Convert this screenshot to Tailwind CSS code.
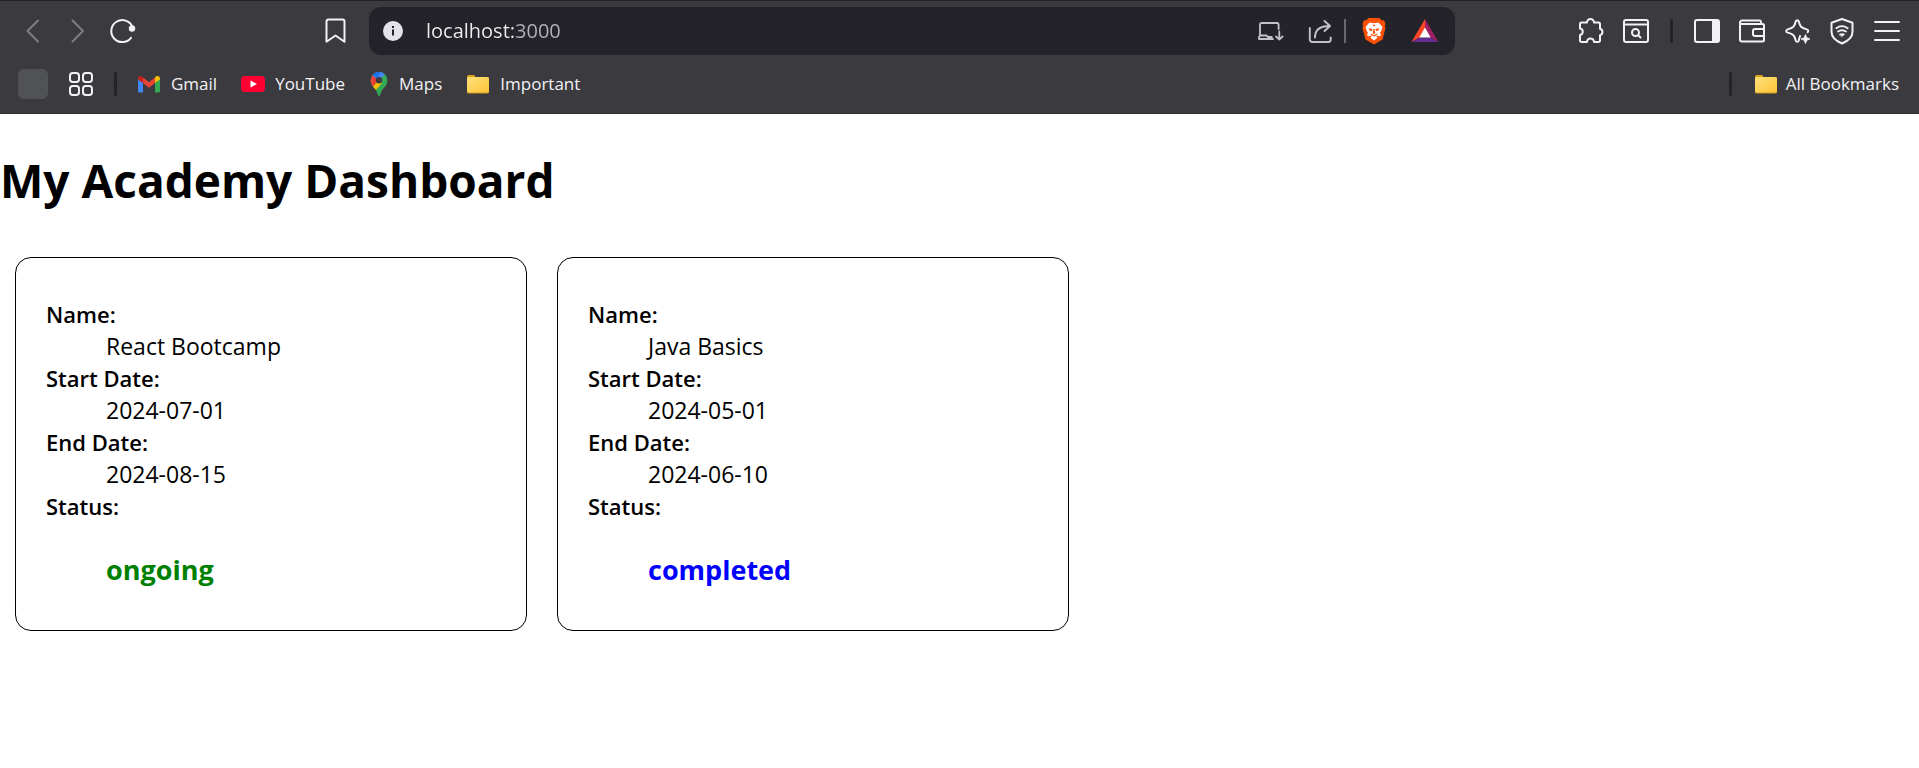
<!DOCTYPE html>
<html lang="en">
<head>
<meta charset="utf-8">
<title>My Academy Dashboard</title>
<script src="https://cdn.jsdelivr.net/npm/@tailwindcss/browser@4"></script>
</head>
<body class="min-h-screen bg-white text-black font-['Open_Sans','Noto_Sans',sans-serif]">
<header class="border-t border-b border-t-[#232227] border-b-[#302f34] bg-[#3b3a3f] text-[#f2f2f5]">
  <div class="flex h-[60px] items-center px-2.5">
    <button aria-label="Back" class="flex h-12 w-[45px] items-center justify-center text-[#7f7e83]"><svg class="size-7" viewBox="0 0 28 28" fill="none" stroke="currentColor" stroke-width="2" stroke-linecap="round" stroke-linejoin="round"><path d="M19 3.500 8.500 14 19 24.500"/></svg></button>
    <button aria-label="Forward" class="flex h-12 w-[45px] items-center justify-center text-[#7f7e83]"><svg class="size-7" viewBox="0 0 28 28" fill="none" stroke="currentColor" stroke-width="2" stroke-linecap="round" stroke-linejoin="round"><path d="M8.500 3.500 19 14 8.500 24.500"/></svg></button>
    <button aria-label="Reload" class="flex h-12 w-[45px] items-center justify-center"><svg class="size-7" viewBox="0 0 28 28" fill="none" stroke="currentColor" stroke-width="2" stroke-linecap="round"><path d="M22 20.800A11 11 0 1 1 23.500 10"/><circle cx="23" cy="11.500" r="3.200" fill="currentColor" stroke="none"/></svg></button>
    <button aria-label="Bookmark this page" class="ml-[167px] flex h-12 w-[45px] items-center justify-center"><svg class="size-7" viewBox="0 0 28 28" fill="none" stroke="currentColor" stroke-width="2" stroke-linejoin="round"><path d="M7.500 2.500h14a2 2 0 0 1 2 2v20.200l-9-6.200-9 6.200V4.500a2 2 0 0 1 2-2z"/></svg></button>
    <div class="ml-3 flex h-12 flex-1 items-center rounded-xl bg-[#242329] pr-1.5 pl-3.5">
      <button aria-label="Site information" class="size-5"><svg class="size-5" viewBox="0 0 20 20"><circle cx="10" cy="10" r="10" fill="#e3e2e8"/><path d="M9 8.500h2v6H9zM9 5h2v2H9z" fill="#242329"/></svg></button>
      <input aria-label="Address" value="localhost:3000" class="ml-[23px] h-8 min-w-0 flex-1 bg-transparent bg-linear-to-r from-[#f0f0f4] from-[90px] to-[#b4b3b9] to-[90px] bg-clip-text text-xl leading-8 text-transparent outline-none">
      <button aria-label="Install app" class="mr-0.5 flex h-12 w-12 items-center justify-center text-[#c3c2c8]"><svg class="size-7" viewBox="0 0 28 28" fill="none" stroke="currentColor" stroke-width="1.800" stroke-linecap="round" stroke-linejoin="round"><path d="M4 18.500V7.500A1.500 1.500 0 0 1 5.500 6h15.600a1.500 1.500 0 0 1 1.500 1.500V12M4 18.500h6.500l1.500 1.500h3.800M4 18.500l-1 1.500v2h14"/><path d="M23.300 14.500v8M20 19.500l3.300 3 3.300-3"/></svg></button>
      <button aria-label="Share" class="flex h-12 w-12 items-center justify-center text-[#c3c2c8]"><svg class="size-7" viewBox="0 0 28 28" fill="none" stroke="currentColor" stroke-width="1.900" stroke-linecap="round" stroke-linejoin="round"><path d="M3.800 11v11.500a2.500 2.500 0 0 0 2.500 2.500h15.900a2.500 2.500 0 0 0 2.500-2.500v-2"/><path d="M9 20.500c0-7.500 4.500-11.500 14.500-11.500M18.500 4l5.500 5-5.500 5"/></svg></button>
      <div class="mr-1 h-6 w-0.5 bg-[#69686e]"></div>
      <button aria-label="Brave Shields" class="mr-[3px] flex h-12 w-12 items-center justify-center"><svg class="size-7" viewBox="0 0 28 28"><path d="M8.500 1h11l2.500 2.500 2-.3L25.500 7l-.7 2 .7 2-3 11.500L14 27.500 5.500 22.500 2.500 11l.7-2-.7-2L4 3.200l2 .3z" fill="#fb5008"/><path d="M9.500 5.500 14 6.300l4.500-.8 4 4.500-1.500 4.500-1 1.200 1 2.300-1.500 1.500-2-1-1 .8 1 1.500L14 23.500l-3.500-2.700 1-1.500-1-.8-2 1L7 18l1-2.300-1-1.200L5.500 10z" fill="#fff"/><path d="M8.500 11.200l4 .8-.5 2-2.300-.5zM19.500 11.200l-4 .8.500 2 2.300-.5zM13.400 12h1.200l.6 4-1.200 1.500L12.800 16zM10.500 16.300l3.500 2 3.500-2-.8 1.900-2.700 1.300-2.700-1.300zM12.200 7.800h3.600L14 9.500z" fill="#fb5008"/></svg></button>
      <button aria-label="Brave Rewards" class="flex h-12 w-12 items-center justify-center"><svg class="size-7" viewBox="0 0 28 28"><path d="M14 2v9L8.500 20.500.5 25z" fill="#ff4724"/><path d="M14 2v9l5.500 9.500 8 4.500z" fill="#9e1f63"/><path d="M.5 25l8-4.500h11l8 4.500z" fill="#662d91"/><path d="M14 10.500 19.700 20.500H8.300z" fill="#fff"/></svg></button>
    </div>
    <button aria-label="Extensions" class="ml-[113px] flex h-12 w-[45px] items-center justify-center"><svg class="size-7" viewBox="0 0 28 28" fill="none" stroke="currentColor" stroke-width="2" stroke-linejoin="round"><path d="M4.500 5.500H10a3.500 3.500 0 0 1 7 0h4.500a1.500 1.500 0 0 1 1.500 1.500v4.800a3.300 3.300 0 0 1 0 6.400v5.300a1.500 1.500 0 0 1-1.500 1.500H17a3.500 3.500 0 0 0-7 0H4.500A1.500 1.500 0 0 1 3 23.500V18a3.300 3.300 0 0 0 0-6.500V7a1.500 1.500 0 0 1 1.500-1.500z"/></svg></button>
    <button aria-label="Search tabs" class="flex h-12 w-[45px] items-center justify-center"><svg class="size-7" viewBox="0 0 28 28" fill="none" stroke="currentColor" stroke-width="2" stroke-linecap="round"><rect x="2" y="3" width="24" height="22" rx="2"/><path d="M2 7.500h24"/><circle cx="13.500" cy="15.500" r="3.500"/><path d="m16.500 18.500 2 2"/></svg></button>
    <div class="mr-[11px] ml-3 h-6 w-[3px] rounded-full bg-[#232227]"></div>
    <button aria-label="Sidebar" class="flex h-12 w-[45px] items-center justify-center"><svg class="size-7" viewBox="0 0 28 28" fill="none" stroke="currentColor" stroke-width="2"><rect x="2" y="3" width="24" height="22" rx="2"/><path d="M19 3h7v22h-7z" fill="currentColor" stroke="none"/></svg></button>
    <button aria-label="Wallet" class="flex h-12 w-[45px] items-center justify-center"><svg class="size-7" viewBox="0 0 28 28" fill="none" stroke="currentColor" stroke-width="2" stroke-linejoin="round"><path d="M23 7V5a1.500 1.500 0 0 0-1.500-1.500H4A2 2 0 0 0 2 5.500 1.800 1.800 0 0 0 4 7h20.500A1.500 1.500 0 0 1 26 8.500V23a1.500 1.500 0 0 1-1.500 1.500H4A2 2 0 0 1 2 22.500v-17"/><path d="M26 12h-9a2 2 0 0 0-2 2v3a2 2 0 0 0 2 2h9"/></svg></button>
    <button aria-label="Leo AI" class="flex h-12 w-[45px] items-center justify-center"><svg class="size-7" viewBox="0 0 28 28" fill="none" stroke="currentColor" stroke-width="2" stroke-linejoin="round"><path d="M17.500 18.300c-1 1.500-1.300 3.300-1.700 5.200-.5 1.700-2.600 1.700-3.100 0-1.200-5-2.200-6.500-8-7.900-2-.5-2-2.700 0-3.200 5.800-1.400 6.800-2.900 8-7.900.5-1.700 2.600-1.700 3.100 0 1.200 5 2.200 6.500 8 7.900 2 .5 2 2.600 0 3.200"/><path d="M22.500 17.500l1.300 3.200 3.200 1.300-3.200 1.300-1.300 3.200-1.300-3.200L18 22l3.200-1.300z" fill="currentColor" stroke-width=".8"/></svg></button>
    <button aria-label="VPN" class="flex h-12 w-[45px] items-center justify-center"><svg class="size-7" viewBox="0 0 28 28" fill="none" stroke="currentColor" stroke-width="2" stroke-linecap="round" stroke-linejoin="round"><path d="M14 2l10.500 3.700v9c0 5-4 9-10.500 11.800C7.500 23.700 3.500 19.700 3.500 14.700v-9z"/><path d="M8.300 11.200c3.500-2.600 7.900-2.600 11.400 0M10 14.600c2.500-1.700 5.500-1.700 8 0" stroke-width="1.800"/><path d="M11.200 17.300c1.800-1.100 3.800-1.100 5.600 0L14 19.600z" fill="currentColor" stroke-width=".5"/></svg></button>
    <button aria-label="Menu" class="flex h-12 w-[45px] items-center justify-center"><svg class="size-7" viewBox="0 0 28 28" fill="none" stroke="currentColor" stroke-width="2" stroke-linecap="round"><path d="M2 5h24M2 14h24M2 23h24"/></svg></button>
  </div>
  <nav aria-label="Bookmarks" class="flex h-[52px] items-center pr-5 pb-1.5 pl-[18px] text-[17px]">
    <button aria-label="Tab group" class="size-[30px] rounded-md bg-[#515256]"></button>
    <button aria-label="Apps" class="ml-[19px]"><svg class="size-7" viewBox="0 0 28 28" fill="none" stroke="currentColor" stroke-width="2"><rect x="3" y="3" width="9" height="9" rx="2.800"/><rect x="16" y="3" width="9" height="9" rx="2.800"/><rect x="3" y="16" width="9" height="9" rx="2.800"/><rect x="16" y="16" width="9" height="9" rx="2.800"/></svg></button>
    <div class="ml-[19px] h-6 w-[3px] rounded-full bg-[#232227]"></div>
    <a href="#" class="ml-5 flex items-center gap-2.5"><svg class="h-[18px] w-6" viewBox="0 0 24 18"><path d="M1 4l5 4v9.500H2.500A1.500 1.500 0 0 1 1 16z" fill="#4285f4"/><path d="M18 8l5-4v12a1.500 1.500 0 0 1-1.500 1.500H18z" fill="#34a853"/><path d="M6 2.500l6 4.700 6-4.700V8l-6 4.800L6 8z" fill="#ea4335"/><path d="M1 4c0-3 2.800-4 5-1.500V8L1 4.500z" fill="#c5221f"/><path d="M23 4c0-3-2.800-4-5-1.500V8l5-3.500z" fill="#fbbc04"/></svg>Gmail</a>
    <a href="#" class="ml-6 flex items-center gap-2.5"><svg class="h-[18px] w-6" viewBox="0 0 24 18"><rect y="1" width="24" height="16" rx="4" fill="#ff0033"/><path d="M9.500 5.500v7L16 9z" fill="#fff"/></svg>YouTube</a>
    <a href="#" class="ml-6 flex items-center gap-2.5"><svg class="h-6 w-5" viewBox="0 0 20 24"><clipPath id="pin"><path d="M10 0a8.300 8.300 0 0 0-8.300 8.300c0 5 3.300 6.700 5.800 10.700C8.800 21 9 24 10 24s1.200-3 2.500-5c2.500-4 5.800-5.700 5.800-10.700A8.300 8.300 0 0 0 10 0z"/></clipPath><g clip-path="url(#pin)"><path d="M0 0h20v24H0z" fill="#34a853"/><path d="M0 0h20v3.500L10 8.500 0 4z" fill="#4285f4"/><path d="M3 2l3-2h6L8 6z" fill="#1a73e8"/><path d="M0 3.500h3.500L10 8.500 4 14.500H0z" fill="#ea4335"/><path d="M3 15.500 14.500 4l3 3L6.500 18.500z" fill="#fbbc04"/><path d="M12.500 6 18 .5 20 8l-2 5-7 11H6l1-5.500 5.500-7z" fill="#34a853"/><path d="M10 8 17 1l-5-1-4 6z" fill="#4285f4"/></g><circle cx="10" cy="8.300" r="3.200" fill="#3b3a3f"/></svg>Maps</a>
    <a href="#" class="ml-6 flex items-center gap-2.5"><svg class="h-5 w-6" viewBox="0 0 24 20"><defs><linearGradient id="fold" x1="0" y1="0" x2="1" y2="1"><stop stop-color="#ffe07c"/><stop offset="1" stop-color="#fcc536"/></linearGradient></defs><path d="M1 2.500A1.500 1.500 0 0 1 2.500 1H8l2 2.500h11V10H1z" fill="#dca11b"/><rect x="1" y="3.500" width="22" height="16" rx="1.500" fill="#d39a20"/><rect x="1" y="3" width="22" height="15.500" rx="1.500" fill="url(#fold)"/></svg>Important</a>
    <div class="mr-[22px] ml-auto h-6 w-[3px] rounded-full bg-[#232227]"></div>
    <a href="#" class="flex items-center gap-2"><svg class="h-5 w-6" viewBox="0 0 24 20"><path d="M1 2.500A1.500 1.500 0 0 1 2.500 1H8l2 2.500h11V10H1z" fill="#dca11b"/><rect x="1" y="3.500" width="22" height="16" rx="1.500" fill="#d39a20"/><rect x="1" y="3" width="22" height="15.500" rx="1.500" fill="url(#fold)"/></svg>All Bookmarks</a>
  </nav>
</header>
<main class="pt-[34px]">
  <h1 class="text-[46px] leading-[64px] font-bold">My Academy Dashboard</h1>
  <div class="mt-[30px] flex flex-wrap">
    <section class="m-[15px] w-lg rounded-2xl border border-black px-[30px] py-10 text-[23px] leading-8">
      <dl>
        <dt class="text-[22px] leading-8 font-semibold">Name:</dt><dd class="ml-[60px]">React Bootcamp</dd>
        <dt class="text-[22px] leading-8 font-semibold">Start Date:</dt><dd class="ml-[60px]">2024-07-01</dd>
        <dt class="text-[22px] leading-8 font-semibold">End Date:</dt><dd class="ml-[60px]">2024-08-15</dd>
        <dt class="text-[22px] leading-8 font-semibold">Status:</dt><dd class="ml-[60px]"><h3 class="mt-7 text-[27px] leading-10 font-bold text-[#008000]">ongoing</h3></dd>
      </dl>
    </section>
    <section class="m-[15px] w-lg rounded-2xl border border-black px-[30px] py-10 text-[23px] leading-8">
      <dl>
        <dt class="text-[22px] leading-8 font-semibold">Name:</dt><dd class="ml-[60px]">Java Basics</dd>
        <dt class="text-[22px] leading-8 font-semibold">Start Date:</dt><dd class="ml-[60px]">2024-05-01</dd>
        <dt class="text-[22px] leading-8 font-semibold">End Date:</dt><dd class="ml-[60px]">2024-06-10</dd>
        <dt class="text-[22px] leading-8 font-semibold">Status:</dt><dd class="ml-[60px]"><h3 class="mt-7 text-[27px] leading-10 font-bold text-[#0000ff]">completed</h3></dd>
      </dl>
    </section>
  </div>
</main>
</body>
</html>
